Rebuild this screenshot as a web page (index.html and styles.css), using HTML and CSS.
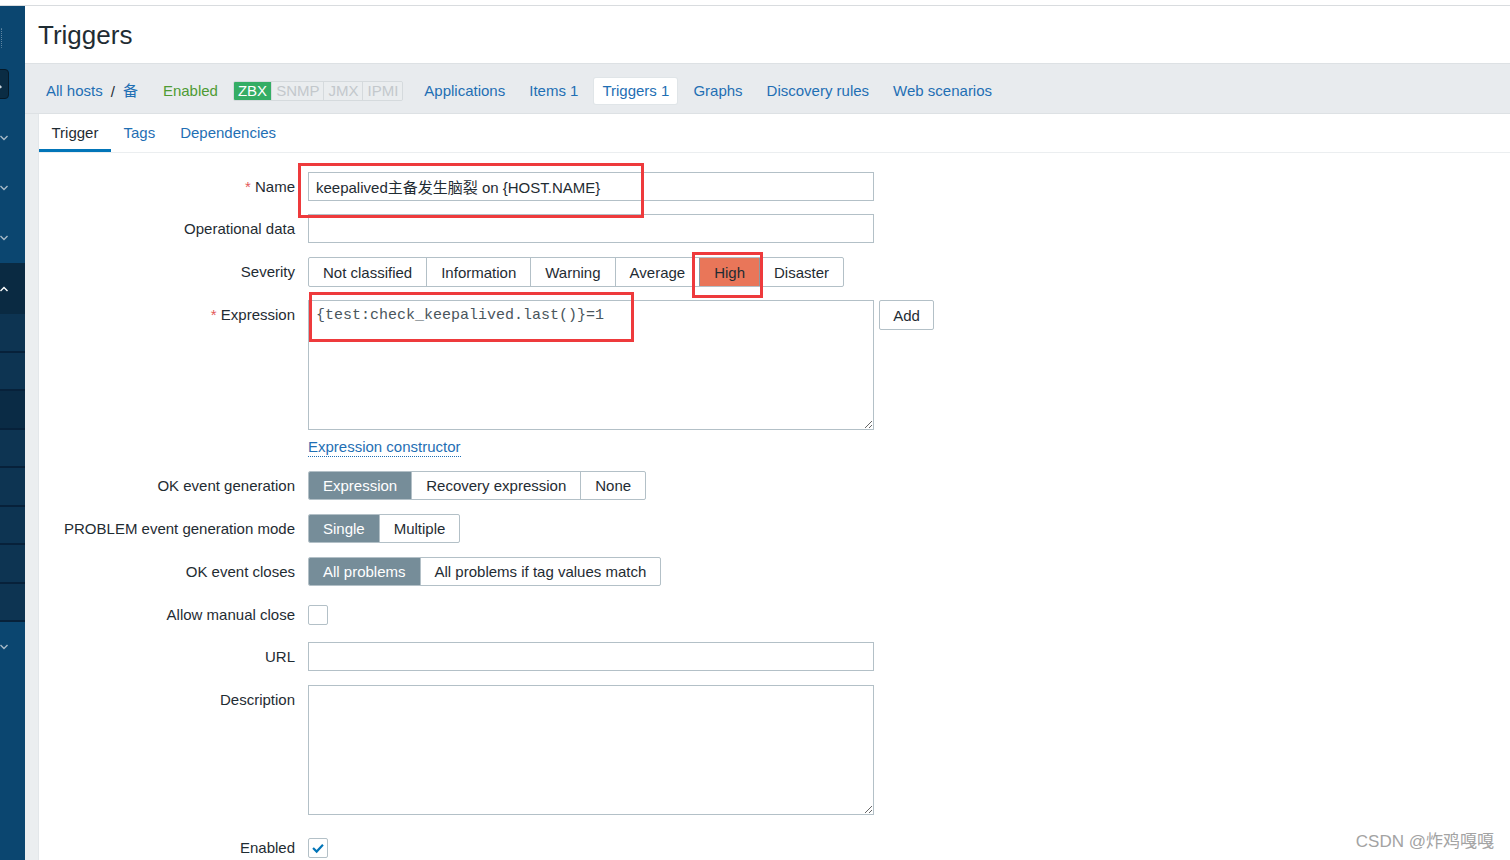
FILE: index.html
```html
<!DOCTYPE html>
<html lang="en">
<head>
<meta charset="utf-8">
<title>Triggers</title>
<link rel="stylesheet" href="styles.css">
</head>
<body>
<div class="topstrip"></div>
<div class="app">
  <aside class="sidebar">
    <div class="sb-logo"><span class="sb-logo-mark"></span></div>
    <div class="sb-search"><span class="sb-search-box"><span class="sb-search-icon"></span></span></div>
    <div class="sb-item"><svg class="chev" viewBox="0 0 8 6"><path d="M0.5 1 L4 4.5 L7.5 1"/></svg></div>
    <div class="sb-item"><svg class="chev" viewBox="0 0 8 6"><path d="M0.5 1 L4 4.5 L7.5 1"/></svg></div>
    <div class="sb-item"><svg class="chev" viewBox="0 0 8 6"><path d="M0.5 1 L4 4.5 L7.5 1"/></svg></div>
    <div class="sb-item sb-open"><svg class="chev chev-up" viewBox="0 0 8 6"><path d="M0.5 5 L4 1.5 L7.5 5"/></svg></div>
    <div class="sb-sub">
      <div class="sb-subitem"></div>
      <div class="sb-subitem"></div>
      <div class="sb-subitem sb-sel"></div>
      <div class="sb-subitem"></div>
      <div class="sb-subitem"></div>
      <div class="sb-subitem"></div>
      <div class="sb-subitem"></div>
      <div class="sb-subitem"></div>
    </div>
    <div class="sb-item"><svg class="chev" viewBox="0 0 8 6"><path d="M0.5 1 L4 4.5 L7.5 1"/></svg></div>
  </aside>

  <main class="main">
    <header class="header"><h1 class="title">Triggers</h1></header>

    <nav class="nav">
      <div class="crumbs">
        <a class="nav-link crumb-first">All hosts</a><span class="crumb-sep">/</span><a class="nav-link">备</a>
      </div>
      <span class="nav-status">Enabled</span>
      <span class="avail">
        <span class="av av-on">ZBX</span><span class="av">SNMP</span><span class="av">JMX</span><span class="av">IPMI</span>
      </span>
      <a class="nav-link">Applications</a>
      <a class="nav-link">Items <span>1</span></a>
      <a class="nav-link nav-current">Triggers <span>1</span></a>
      <a class="nav-link">Graphs</a>
      <a class="nav-link">Discovery rules</a>
      <a class="nav-link">Web scenarios</a>
    </nav>

    <section class="content">
      <div class="card">
        <div class="tabs">
          <span class="tab tab-active">Trigger</span>
          <a class="tab">Tags</a>
          <a class="tab">Dependencies</a>
        </div>

        <form class="form">
          <div class="row r-name">
            <label class="lbl"><span class="req">*</span> Name</label>
            <input class="inp" type="text" value="keepalived主备发生脑裂 on {HOST.NAME}">
          </div>
          <div class="row r-op">
            <label class="lbl">Operational data</label>
            <input class="inp" type="text" value="">
          </div>
          <div class="row r-sev">
            <label class="lbl">Severity</label>
            <div class="seg">
              <span class="seg-btn">Not classified</span>
              <span class="seg-btn">Information</span>
              <span class="seg-btn">Warning</span>
              <span class="seg-btn">Average</span>
              <span class="seg-btn sev-high">High</span>
              <span class="seg-btn sev-after">Disaster</span>
            </div>
          </div>
          <div class="row r-expr">
            <label class="lbl"><span class="req">*</span> Expression</label>
            <textarea class="ta mono">{test:check_keepalived.last()}=1</textarea>
            <button type="button" class="btn-add">Add</button>
          </div>
          <div class="row r-link">
            <span class="lbl"></span>
            <a class="dotted">Expression constructor</a>
          </div>
          <div class="row r-seg">
            <label class="lbl">OK event generation</label>
            <div class="seg">
              <span class="seg-btn seg-sel">Expression</span>
              <span class="seg-btn">Recovery expression</span>
              <span class="seg-btn">None</span>
            </div>
          </div>
          <div class="row r-seg">
            <label class="lbl">PROBLEM event generation mode</label>
            <div class="seg">
              <span class="seg-btn seg-sel">Single</span>
              <span class="seg-btn">Multiple</span>
            </div>
          </div>
          <div class="row r-seg">
            <label class="lbl">OK event closes</label>
            <div class="seg">
              <span class="seg-btn seg-sel">All problems</span>
              <span class="seg-btn">All problems if tag values match</span>
            </div>
          </div>
          <div class="row r-check">
            <label class="lbl">Allow manual close</label>
            <span class="cb"></span>
          </div>
          <div class="row r-url">
            <label class="lbl">URL</label>
            <input class="inp" type="text" value="">
          </div>
          <div class="row r-desc">
            <label class="lbl">Description</label>
            <textarea class="ta"></textarea>
          </div>
          <div class="row r-check">
            <label class="lbl">Enabled</label>
            <span class="cb cb-on"><svg viewBox="0 0 20 20"><path d="M4.5 10 L8.5 14 L15.5 6.5"/></svg></span>
          </div>
        </form>
      </div>
    </section>
  </main>
</div>

<div class="annot annot-name"></div>
<div class="annot annot-high"></div>
<div class="annot annot-expr"></div>
<div class="watermark">CSDN @炸鸡嘎嘎</div>
</body>
</html>
```

FILE: styles.css
```css
* { box-sizing: border-box; }

html, body {
  margin: 0;
  padding: 0;
  width: 1510px;
  height: 860px;
  overflow: hidden;
  background: #ffffff;
  font-family: "Liberation Sans", Arial, "Noto Sans CJK SC", sans-serif;
  font-size: 15px;
  color: #1f2c33;
}

body { position: relative; }

a { color: #0275b8; text-decoration: none; cursor: pointer; }

.topstrip {
  height: 6px;
  background: #ffffff;
  border-bottom: 1px solid #d9dcdf;
}

.app {
  display: flex;
  height: 854px;
}

/* ---------- sidebar ---------- */
.sidebar {
  width: 25px;
  flex: none;
  background: #0b4670;
  display: flex;
  flex-direction: column;
  overflow: hidden;
}

.sb-logo {
  height: 57px;
  position: relative;
}
.sb-logo-mark {
  position: absolute;
  left: -6px;
  top: 22px;
  width: 8px;
  height: 20px;
  border: 1px dotted rgba(255,255,255,0.35);
  border-radius: 1px;
}

.sb-search {
  height: 50px;
  padding-top: 6px;
  position: relative;
}
.sb-search-box {
  display: block;
  margin-left: -22px;
  width: 31px;
  height: 30px;
  background: #0a2c44;
  border: 1px solid #061a29;
  border-radius: 4px;
  position: relative;
}
.sb-search-icon {
  position: absolute;
  right: 6px;
  top: 15px;
  width: 5px;
  height: 2px;
  background: #c9d3db;
  transform: rotate(45deg);
}

.sb-item {
  height: 50px;
  display: flex;
  align-items: center;
}
.chev {
  width: 8px;
  height: 6px;
  margin-left: 0;
  fill: none;
  stroke: #a7b9c7;
  stroke-width: 1.4;
}
.sb-open { background: #0a2a42; height: 51px; }
.chev-up { stroke: #ffffff; }

.sb-sub {
  display: flex;
  flex-direction: column;
}
.sb-subitem {
  height: 38.5px;
  background: #0d3452;
  border-bottom: 2px solid #07213a;
}
.sb-sel { background: #0a2b45; }

/* ---------- main ---------- */
.main {
  flex: 1;
  display: flex;
  flex-direction: column;
  background: #ebeef0;
  min-width: 0;
}

.header {
  height: 57px;
  flex: none;
  background: #ffffff;
  padding-left: 13px;
  display: flex;
  align-items: center;
}
.title {
  margin: 0;
  font-size: 26px;
  font-weight: normal;
  color: #1f2c33;
  line-height: 30px;
  padding-top: 1px;
}

.nav {
  height: 51px;
  flex: none;
  background: #e8ebee;
  border-top: 1px solid #dde1e4;
  border-bottom: 1px solid #dde1e4;
  padding: 5px 0 0 13px;
  display: flex;
  align-items: center;
  gap: 8px;
}
.crumbs { display: flex; align-items: center; }
.crumb-sep { margin: 0 8px; color: #1f2c33; }
.crumb-first { padding-right: 0 !important; }
.crumbs .nav-link:last-child { padding-left: 0; }

.nav-link {
  display: inline-block;
  padding: 0 8px;
  line-height: 26px;
  color: #1f6fb4;
  white-space: nowrap;
}
.nav-current {
  background: #ffffff;
  border-radius: 2px;
  color: #1f6fb4;
  box-shadow: 0 0 0 1px #e0e5e8;
}
.nav-status {
  padding: 0 8px 0 9px;
  color: #4e9b34;
  line-height: 26px;
}
.avail {
  display: inline-flex;
  border: 1px solid #d5dadd;
  border-radius: 2px;
  overflow: hidden;
  height: 20px;
  margin-left: -1px;
  margin-right: 5px;
}
.av {
  padding: 0 4px;
  line-height: 18px;
  color: #c3c8cc;
  background: #eaedef;
  border-left: 1px solid #d5dadd;
}
.av:first-child { border-left: none; }
.av-on {
  background: #34ad65;
  color: #ffffff;
}

.content {
  flex: 1;
  padding-left: 13px;
  min-height: 0;
}
.card {
  height: 100%;
  background: #ffffff;
  border-left: 1px solid #e3e7ea;
}

.tabs {
  display: flex;
  height: 39px;
  border-bottom: 1px solid #ebeef0;
}
.tab {
  padding: 0 12.5px;
  line-height: 38px;
  color: #1f6fb4;
}
.tab-active {
  color: #1f2c33;
  box-shadow: inset 0 -3px 0 #0275b8;
}

/* ---------- form ---------- */
.form {
  padding-top: 19px;
  display: flex;
  flex-direction: column;
}
.row {
  display: flex;
  align-items: flex-start;
  gap: 13px;
}
.lbl {
  width: 256px;
  flex: none;
  text-align: right;
  line-height: 29px;
  color: #1f2c33;
  white-space: nowrap;
}
.req { color: #e45959; }

.inp {
  width: 566px;
  height: 29px;
  border: 1px solid #b3c0c7;
  border-radius: 0;
  padding: 0 7px;
  font-family: "Liberation Sans", Arial, "Noto Sans CJK SC", sans-serif;
  font-size: 15px;
  color: #1f2c33;
  background: #ffffff;
  outline: none;
}

.r-name { margin-bottom: 13px; }
.r-op { margin-bottom: 14px; }
.r-sev { margin-bottom: 13px; }
.r-sev .lbl { line-height: 30px; }
.r-expr .lbl { line-height: 30px; }
.r-link { padding-top: 8px; margin-bottom: 14px; }
.r-link .lbl { line-height: 18px; }
.r-seg { margin-bottom: 14px; }
.r-seg .lbl { line-height: 29px; }
.r-check { margin-bottom: 13px; height: 29px; align-items: center; }
.r-url { margin-bottom: 14px; }
.r-desc { margin-bottom: 18px; }

.seg {
  display: inline-flex;
  border: 1px solid #b3c0c7;
  border-radius: 2px;
  overflow: hidden;
  background: #ffffff;
}
.r-sev .seg { height: 30px; }
.r-sev .seg-btn { padding: 0 14px; }
.r-seg .seg { height: 29px; }
.seg-btn {
  padding: 0 14px;
  display: flex;
  align-items: center;
  border-left: 1px solid #b3c0c7;
  white-space: nowrap;
  color: #1f2c33;
}
.seg-btn:first-child { border-left: none; }
.seg-sel {
  background: #768d99;
  color: #ffffff;
}
.sev-high {
  background: #e97659;
  border-left: 1px solid #8c9aa2;
  color: #1f2c33;
}
.sev-after { border-left: 1px solid #8c9aa2; }

.ta {
  width: 566px;
  height: 130px;
  border: 1px solid #b3c0c7;
  border-radius: 0;
  padding: 4px 7px;
  font-family: "Liberation Sans", Arial, sans-serif;
  font-size: 15px;
  color: #1f2c33;
  outline: none;
  resize: both;
  background: #ffffff;
}
.mono {
  font-family: "Liberation Mono", "Courier New", monospace;
  font-size: 15px;
  line-height: 18px;
  color: #4a565d;
  padding-top: 6px;
}

.btn-add {
  margin-left: -8px;
  width: 55px;
  height: 30px;
  background: #ffffff;
  border: 1px solid #b3c0c7;
  border-radius: 2px;
  font-family: "Liberation Sans", Arial, sans-serif;
  font-size: 15px;
  color: #1f2c33;
  padding: 0;
}

.dotted {
  line-height: 18px;
  color: #1f6fb4;
  border-bottom: 1px dotted #1f6fb4;
}

.cb {
  width: 20px;
  height: 20px;
  border: 1px solid #b3c0c7;
  border-radius: 2px;
  background: #ffffff;
  display: inline-flex;
  align-items: center;
  justify-content: center;
}
.cb svg {
  width: 18px;
  height: 18px;
  fill: none;
  stroke: #0275b8;
  stroke-width: 2.4;
}

/* ---------- overlays ---------- */
.annot {
  position: absolute;
  border: 3px solid #ee3a3c;
  pointer-events: none;
}
.annot-name { left: 298px; top: 163px; width: 346px; height: 55px; }
.annot-high { left: 692px; top: 252px; width: 71px; height: 46px; }
.annot-expr { left: 309px; top: 292px; width: 325px; height: 50px; }

.watermark {
  position: absolute;
  right: 16px;
  top: 832px;
  font-size: 17px;
  line-height: 20px;
  color: #a3a3a3;
  font-family: "Liberation Sans", Arial, "Noto Sans CJK SC", sans-serif;
}
```
